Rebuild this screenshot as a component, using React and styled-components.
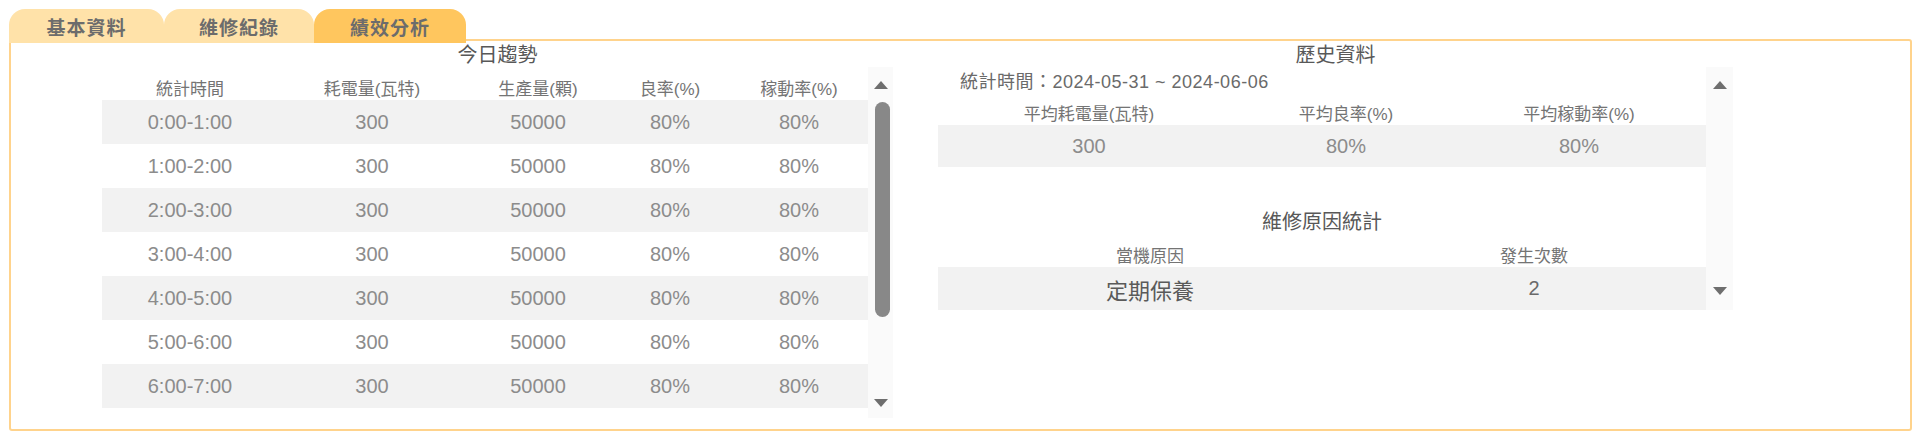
import React from 'react';
import styled, { createGlobalStyle } from 'styled-components';

const GlobalStyle = createGlobalStyle`
html, body {
  margin: 0;
  padding: 0;
  background: #FFFFFF;
  font-family: "Liberation Sans", "Noto Sans CJK TC", sans-serif;
}
`

const Page = styled.div`
width: 1925px;
height: 435px;
box-sizing: border-box;
padding: 9px 13px 0 9px;
background: #FFFFFF;
`

const TabBar = styled.div`
display: flex;
height: 34px;
margin-bottom: -4px;
position: relative;
z-index: 1;
`

const Tab = styled.div`
display: flex;
align-items: center;
justify-content: center;
width: ${p => p.w}px;
height: 100%;
border-radius: 16px 16px 0 0;
background: ${p => (p.active ? '#FFC65E' : '#FFE2A9')};
color: #6C6C6C;
font-size: 19px;
font-weight: bold;
letter-spacing: 1px;
`

const Panel = styled.div`
display: flex;
gap: 45px;
height: 392px;
box-sizing: border-box;
border: 2px solid #FFD38C;
border-radius: 3px;
padding-left: 91px;
`

const Section = styled.div`
display: flex;
flex-direction: column;
width: ${p => p.w}px;
`

const Title = styled.div`
height: 26px;
line-height: 28px;
text-align: center;
font-size: 20px;
color: #585858;
`

const Body = styled.div`
display: flex;
height: ${p => p.h}px;
`

const TableBox = styled.div`
flex: 1;
display: flex;
flex-direction: column;
`

const Row = styled.div`
display: grid;
grid-template-columns: ${p => p.cols};
height: ${p => p.h}px;
padding-top: ${p => p.pt || 0}px;
box-sizing: border-box;
align-items: ${p => (p.pt ? 'start' : 'center')};
background: ${p => (p.shade ? '#F2F2F2' : 'transparent')};
`

const HeadCell = styled.div`
text-align: center;
font-size: 17px;
line-height: 22px;
color: #747474;
`

const Cell = styled.div`
text-align: center;
font-size: ${p => p.size || 20}px;
color: ${p => p.color || '#8C8C8C'};
font-weight: ${p => (p.bold ? 'bold' : 'normal')};
`

const DateLine = styled.div`
height: 30px;
line-height: 30px;
padding-left: 22px;
font-size: 18px;
color: #6A6A6A;
letter-spacing: 0.5px;
`

const SubTitle = styled.div`
margin-top: 40px;
height: 30px;
line-height: 30px;
text-align: center;
font-size: 20px;
color: #585858;
`

const Scroll = styled.div`
position: relative;
width: ${p => p.w}px;
height: 100%;
background: #FAFAFA;
`

const Arrow = styled.svg`
position: absolute;
left: 50%;
top: ${p => p.top}px;
transform: translateX(-50%);
`

const Thumb = styled.div`
position: absolute;
left: 7px;
top: 35px;
width: 15px;
height: 215px;
border-radius: 8px;
background: #888888;
`

function UpArrow({ top }) {
  return (
    <Arrow top={top} width="14" height="8" viewBox="0 0 14 8">
      <polygon points="7,0 14,8 0,8" fill="#6E6E6E" />
    </Arrow>
  )
}

function DownArrow({ top }) {
  return (
    <Arrow top={top} width="14" height="8" viewBox="0 0 14 8">
      <polygon points="0,0 14,0 7,8" fill="#6E6E6E" />
    </Arrow>
  )
}

const todayCols = '176px 188px 144px 120px 138px';
const todayRows = ['0:00-1:00', '1:00-2:00', '2:00-3:00', '3:00-4:00', '4:00-5:00', '5:00-6:00', '6:00-7:00'];
const histCols = '302px 212px 254px';
const reasonCols = '424px 344px';

export default function App() {
  return (
    <Page>
      <GlobalStyle />
      <TabBar>
        <Tab w={155}>基本資料</Tab>
        <Tab w={150}>維修紀錄</Tab>
        <Tab w={152} active>績效分析</Tab>
      </TabBar>
      <Panel>
        <Section w={791}>
          <Title>今日趨勢</Title>
          <Body h={351}>
            <TableBox>
              <Row cols={todayCols} h={33} pt={12}>
                <HeadCell>統計時間</HeadCell>
                <HeadCell>耗電量(瓦特)</HeadCell>
                <HeadCell>生產量(顆)</HeadCell>
                <HeadCell>良率(%)</HeadCell>
                <HeadCell>稼動率(%)</HeadCell>
              </Row>
              {todayRows.map((t, i) => (
                <Row key={t} cols={todayCols} h={44} shade={i % 2 === 0}>
                  <Cell>{t}</Cell>
                  <Cell>300</Cell>
                  <Cell>50000</Cell>
                  <Cell>80%</Cell>
                  <Cell>80%</Cell>
                </Row>
              ))}
            </TableBox>
            <Scroll w={25}>
              <UpArrow top={14} />
              <Thumb />
              <DownArrow top={332} />
            </Scroll>
          </Body>
        </Section>
        <Section w={795}>
          <Title>歷史資料</Title>
          <Body h={243}>
            <TableBox>
              <DateLine>統計時間：2024-05-31 ~ 2024-06-06</DateLine>
              <Row cols={histCols} h={28} pt={7}>
                <HeadCell>平均耗電量(瓦特)</HeadCell>
                <HeadCell>平均良率(%)</HeadCell>
                <HeadCell>平均稼動率(%)</HeadCell>
              </Row>
              <Row cols={histCols} h={42} shade>
                <Cell>300</Cell>
                <Cell>80%</Cell>
                <Cell>80%</Cell>
              </Row>
              <SubTitle>維修原因統計</SubTitle>
              <Row cols={reasonCols} h={30} pt={9}>
                <HeadCell>當機原因</HeadCell>
                <HeadCell>發生次數</HeadCell>
              </Row>
              <Row cols={reasonCols} h={43} shade>
                <Cell size={22} color="#5A5A5A">定期保養</Cell>
                <Cell color="#6A6A6A">2</Cell>
              </Row>
            </TableBox>
            <Scroll w={27}>
              <UpArrow top={14} />
              <DownArrow top={220} />
            </Scroll>
          </Body>
        </Section>
      </Panel>
    </Page>
  )
}
